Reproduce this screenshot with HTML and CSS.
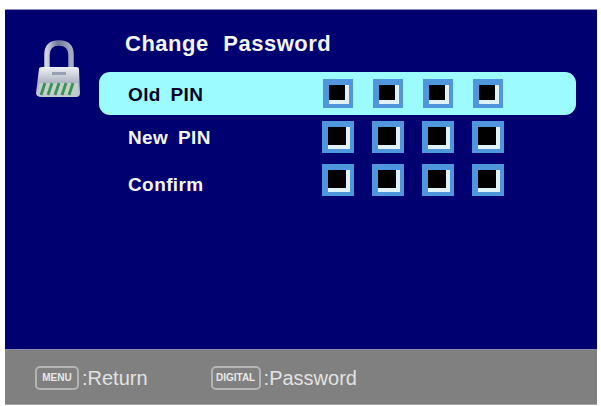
FILE: index.html
```html
<!DOCTYPE html>
<html lang="en">
<head>
<meta charset="utf-8">
<title>Change Password</title>
<link rel="stylesheet" href="styles.css">
</head>
<body>
<div class="screen">
  <main class="panel">
    <svg class="lock" viewBox="0 0 46 58" aria-hidden="true">
      <defs>
        <linearGradient id="shackle" x1="0" x2="1" y1="0" y2="0">
          <stop offset="0" stop-color="#cfd5e2"/>
          <stop offset="0.45" stop-color="#6f7896"/>
          <stop offset="1" stop-color="#a4adc2"/>
        </linearGradient>
        <linearGradient id="body" x1="0" x2="0" y1="0" y2="1">
          <stop offset="0" stop-color="#eef0f3"/>
          <stop offset="0.55" stop-color="#aab2c0"/>
          <stop offset="1" stop-color="#c6ced2"/>
        </linearGradient>
      </defs>
      <path d="M12 30 V15 C12 6 17 3 24 3 C31 3 36 6 36 15 V30" fill="none" stroke="url(#shackle)" stroke-width="5.500"/>
      <path d="M4 29 Q4 27 7 27 H41 Q44 27 44 29 L45 53 Q45 57 41 57 H7 Q1 57 1 53 Z" fill="url(#body)"/>
      <rect x="17" y="32" width="14" height="3" fill="#98a1b4"/>
      <path d="M4 43 H43 V54 H4 Z" fill="#c3d2c8"/>
      <g stroke="#3f8f5c" stroke-width="2.800">
        <path d="M6 55 L10 43"/><path d="M13 55 L17 43"/><path d="M20 55 L24 43"/><path d="M27 55 L31 43"/><path d="M34 55 L38 43"/>
      </g>
    </svg>
    <div class="content">
      <h1 class="title">Change Password</h1>
      <div class="row row-active">
        <span class="label">Old PIN</span>
        <div class="pins pins-small"><i class="pin"></i><i class="pin"></i><i class="pin"></i><i class="pin"></i></div>
      </div>
      <div class="row">
        <span class="label">New PIN</span>
        <div class="pins"><i class="pin"></i><i class="pin"></i><i class="pin"></i><i class="pin"></i></div>
      </div>
      <div class="row">
        <span class="label label-low">Confirm</span>
        <div class="pins"><i class="pin"></i><i class="pin"></i><i class="pin"></i><i class="pin"></i></div>
      </div>
    </div>
  </main>
  <footer class="footer">
    <span class="hint"><span class="key key-menu">MENU</span>:Return</span>
    <span class="hint"><span class="key key-digital">DIGITAL</span>:Password</span>
  </footer>
</div>
</body>
</html>
```
FILE: styles.css
```css
html, body {
  margin: 0;
  padding: 0;
  background: #fff;
}
.screen {
  width: 592px;
  margin: 9px 0 0 5px;
  font-family: "Liberation Sans", Arial, sans-serif;
}
.panel {
  height: 340px;
  background: #000070;
  border-top: 1px solid #8d8db8;
  box-sizing: border-box;
  display: flex;
  align-items: flex-start;
}
.lock {
  width: 46px;
  height: 58px;
  margin: 30px 0 0 30px;
  flex: none;
}
.content {
  margin-left: 18px;
  width: 477px;
  flex: none;
}
.title {
  margin: 20px 0 0 26px;
  height: 42px;
  font-size: 22px;
  line-height: 28px;
  font-weight: 700;
  color: #f4f4f4;
  word-spacing: 8px;
  letter-spacing: 0.5px;
}
.row {
  height: 43px;
  display: flex;
  align-items: center;
  color: #f4f4f4;
}
.row-active {
  background: #9bfbff;
  border-radius: 11px;
  color: #05052a;
}
.label {
  width: 194px;
  margin-left: 29px;
  padding-top: 2px;
  font-size: 19px;
  font-weight: 700;
  word-spacing: 4px;
  letter-spacing: 0.4px;
}
.label-low {
  padding-top: 11px;
}
.pins {
  display: flex;
  gap: 18px;
}
.pin {
  display: block;
  box-sizing: border-box;
  width: 32px;
  height: 32px;
  border-style: solid;
  border-color: #4f96dc;
  border-width: 6px 4px 4px 6px;
  background: #000;
  box-shadow: inset -4px -4px 0 #e0f2f6;
}
.pins-small .pin {
  width: 30px;
  height: 29px;
  margin: 0 1px;
}
.footer {
  height: 56px;
  box-sizing: border-box;
  background: #808080;
  border-top: 1px solid #8888a8;
  border-bottom: 1px solid #a8a8a8;
  display: flex;
  align-items: center;
  padding: 2px 0 0 30px;
  gap: 63px;
  color: #e2e2e2;
  font-size: 20px;
}
.hint {
  display: flex;
  align-items: center;
  gap: 3px;
}
.key {
  display: block;
  box-sizing: border-box;
  height: 24px;
  line-height: 20px;
  border: 2px solid #b4b4b4;
  border-radius: 5px;
  text-align: center;
  font-size: 10px;
  font-weight: 700;
  color: #e8e8e8;
}
.key-menu {
  width: 44px;
}
.key-digital {
  width: 50px;
}
```
